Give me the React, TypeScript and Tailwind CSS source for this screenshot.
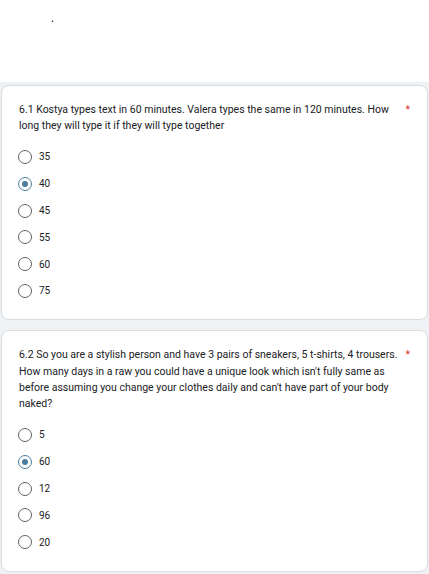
import React from 'react';

type Question = {
  id: string;
  title: string;
  options: string[];
  selected: string;
};

const QUESTIONS: Question[] = [
  {
    id: 'q61',
    title: '6.1 Kostya types text in 60 minutes. Valera types the same in 120 minutes. How long they will type it if they will type together',
    options: ['35', '40', '45', '55', '60', '75'],
    selected: '40',
  },
  {
    id: 'q62',
    title: "6.2 So you are a stylish person and have 3 pairs of sneakers, 5 t-shirts, 4 trousers. How many days in a raw you could have a unique look which isn't fully same as before assuming you change your clothes daily and can't have part of your body naked?",
    options: ['5', '60', '12', '96', '20'],
    selected: '60',
  },
];

const Radio = ({ checked }: { checked: boolean }) => (
  <span
    className={
      'flex items-center justify-center w-[14px] h-[14px] rounded-full border-[1.5px] ' +
      (checked ? 'border-[#4a7d9b]' : 'border-[#5f6368]')
    }
  >
    {checked && <span className="w-[6px] h-[6px] rounded-full bg-[#4a7d9b]" />}
  </span>
);

const QuestionCard = ({ q }: { q: Question }) => (
  <div className="mx-[1px] bg-white border border-[#dadce0] rounded-[8px] pt-[16px] pb-[15px] pl-[17px] pr-[17px]">
    <div className="flex text-[10.5px] leading-[16.3px] text-[#202124]">
      <div className="flex-1">{q.title}</div>
      <span className="pl-[4px] text-[#d93025]">*</span>
    </div>
    <div className="mt-[9px] flex flex-col">
      {q.options.map((opt) => (
        <label key={opt} className="flex items-center h-[26.8px]">
          <span className="ml-[-1px]">
            <Radio checked={opt === q.selected} />
          </span>
          <span className="ml-[7px] text-[10px] text-[#202124]">{opt}</span>
        </label>
      ))}
    </div>
  </div>
);

export default function App() {
  return (
    <div className="w-[429px] min-h-[574px] bg-[#eff2f5] font-['Roboto',sans-serif]">
      <div className="h-[82px] bg-white pl-[51px] pt-[10px] text-[12px] leading-[16px] text-black">.</div>
      <div className="pt-[3px] flex flex-col gap-[10px]">
        {QUESTIONS.map((q) => (
          <QuestionCard key={q.id} q={q} />
        ))}
      </div>
    </div>
  );
}
